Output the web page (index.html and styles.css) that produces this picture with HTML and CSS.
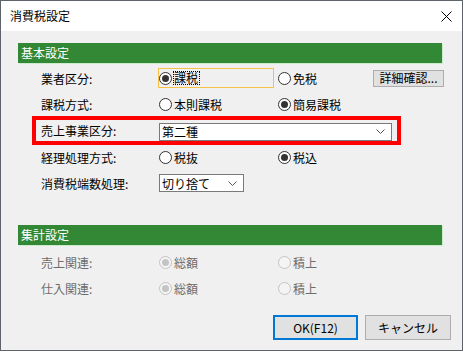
FILE: index.html
```html
<!DOCTYPE html>
<html lang="ja">
<head>
<meta charset="utf-8">
<title>消費税設定</title>
<link rel="stylesheet" href="styles.css">
</head>
<body>
<div class="win">
  <div class="titlebar">
    <span class="title">消費税設定</span>
    <svg class="close" width="11" height="11" viewBox="0 0 11 11"><path d="M0.5 0.5 L10.5 10.5 M10.5 0.5 L0.5 10.5" stroke="#000" stroke-width="1" fill="none"/></svg>
  </div>
  <div class="content">
    <div class="sec-h">基本設定</div>
    <div class="sec-body">
      <div class="row r1">
        <span class="lbl">業者区分:</span>
        <span class="c2">
          <span class="focus"><span class="rb on"><span class="dot"></span></span><span class="ftext">課税</span></span>
        </span>
        <span class="c3"><span class="rb"><span class="dot"></span></span><span class="rt">免税</span></span>
        <span class="btn sm">詳細確認...</span>
      </div>
      <div class="row r2">
        <span class="lbl">課税方式:</span>
        <span class="c2"><span class="rb"><span class="dot"></span></span><span class="rt">本則課税</span></span>
        <span class="c3"><span class="rb on"><span class="dot"></span></span><span class="rt">簡易課税</span></span>
      </div>
      <div class="row r3 hl">
        <span class="lbl">売上事業区分:</span>
        <span class="combo wide"><span>第二種</span><svg width="9" height="5" viewBox="0 0 9 5"><path d="M0.5 0.5 L4.5 4.5 L8.5 0.5" stroke="#555" fill="none"/></svg></span>
      </div>
      <div class="row r4">
        <span class="lbl">経理処理方式:</span>
        <span class="c2"><span class="rb"><span class="dot"></span></span><span class="rt">税抜</span></span>
        <span class="c3"><span class="rb on"><span class="dot"></span></span><span class="rt">税込</span></span>
      </div>
      <div class="row r5">
        <span class="lbl">消費税端数処理:</span>
        <span class="combo short"><span>切り捨て</span><svg width="9" height="5" viewBox="0 0 9 5"><path d="M0.5 0.5 L4.5 4.5 L8.5 0.5" stroke="#555" fill="none"/></svg></span>
      </div>
    </div>

    <div class="sec-h sec2">集計設定</div>
    <div class="sec-body dis">
      <div class="row rd">
        <span class="lbl">売上関連:</span>
        <span class="c2"><span class="rb on"><span class="dot"></span></span><span class="rt">総額</span></span>
        <span class="c3"><span class="rb"><span class="dot"></span></span><span class="rt">積上</span></span>
      </div>
      <div class="row rd">
        <span class="lbl">仕入関連:</span>
        <span class="c2"><span class="rb on"><span class="dot"></span></span><span class="rt">総額</span></span>
        <span class="c3"><span class="rb"><span class="dot"></span></span><span class="rt">積上</span></span>
      </div>
    </div>

    <div class="footer">
      <span class="btn big ok">OK(F12)</span>
      <span class="btn big">キャンセル</span>
    </div>
  </div>
</div>
</body>
</html>
```

FILE: styles.css
```css
* { box-sizing: border-box; }
html, body { margin: 0; padding: 0; }
body {
  font-family: "Noto Sans CJK JP", "Noto Sans", sans-serif;
  font-size: 12px;
  color: #000;
  background: #f0f0f0;
}
.win {
  width: 463px;
  height: 351px;
  border: 1px solid #5f646a;
  background: #f0f0f0;
  display: flex;
  flex-direction: column;
}
.titlebar {
  height: 30px;
  flex: none;
  background: #fff;
  display: flex;
  align-items: center;
  justify-content: space-between;
  padding: 0 10px 0 9px;
}
.title { font-size: 12px; line-height: 14px; }
.close { display: block; }
.content {
  flex: 1;
  padding: 12px 11px 0 17px;
  display: flex;
  flex-direction: column;
}
.sec-h {
  height: 20px;
  margin-right: 9px;
  background: #338835;
  color: #fff;
  font-size: 12px;
  line-height: 20px;
  padding-left: 3px;
  box-shadow: 1px 1px 0 #cbeccb;
}
.sec2 { margin-top: 29px; }
.sec-body {
  padding-left: 14px;
  padding-top: 1px;
  display: flex;
  flex-direction: column;
}
.row {
  display: flex;
  align-items: center;
  padding-left: 9px;
}
.r1 { height: 28px; }
.r2 { height: 24px; }
.r3 { height: 29px; }
.r4 { height: 25px; }
.r5 { height: 26px; }
.hl {
  width: 369px;
  border: 4px solid #ff0000;
  padding-left: 5px;
}
.lbl { width: 117px; flex: none; white-space: nowrap; }
.c2, .c3 {
  display: flex;
  align-items: center;
  flex: none;
  padding-left: 1px;
}
.c2 { width: 119px; }
.c3 { width: 96px; }
.focus {
  display: flex;
  align-items: center;
  width: 116px;
  height: 20px;
  margin-left: -1px;
  border: 1px solid #f5c146;
}
.rb {
  width: 13px;
  height: 13px;
  flex: none;
  border: 1px solid #333;
  border-radius: 50%;
  background: #fff;
  display: flex;
  align-items: center;
  justify-content: center;
  margin-right: 2px;
}
.rb .dot { width: 7px; height: 7px; border-radius: 50%; }
.rb.on .dot { background: #333; }
.ftext {
  display: inline-block;
  border: 1px dotted #000;
  line-height: 12px;
  padding: 0 1px 0 0;
  margin-left: -1px;
}
.rt { white-space: nowrap; }
.btn {
  display: flex;
  align-items: center;
  justify-content: center;
  background: #e1e1e1;
  border: 1px solid #adadad;
  white-space: nowrap;
  flex: none;
}
.btn.sm { width: 71px; height: 17px; line-height: 14px; }
.combo {
  display: flex;
  align-items: center;
  justify-content: space-between;
  background: #fff;
  border: 1px solid #7a7a7a;
  height: 18px;
  padding: 0 6px 0 2px;
  margin-left: 1px;
  flex: none;
}
.combo svg { display: block; }
.combo.wide { width: 233px; margin-top: 2px; }
.combo.short { width: 85px; }
.dis { padding-top: 4px; }
.rd { height: 26px; }
.dis .lbl, .dis .rt { color: #6d6d6d; }
.dis .rb { border-color: #c4c4c4; background: #f4f4f4; }
.dis .rb.on .dot { background: #c4c4c4; }
.footer {
  display: flex;
  justify-content: flex-end;
  gap: 7px;
  margin-top: 14px;
}
.btn.big { height: 25px; width: 86px; }
.btn.ok { width: 85px; border: 2px solid #0078d7; }
```
